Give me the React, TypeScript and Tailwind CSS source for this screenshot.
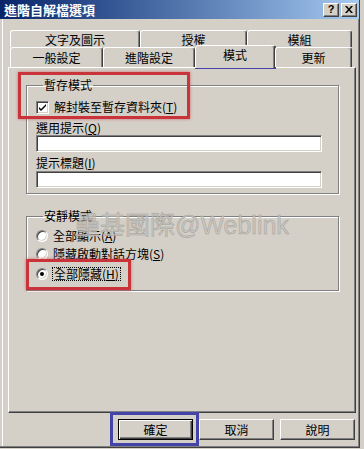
import type { ReactNode } from "react";

const raised =
  "border border-t-white border-l-white border-r-[#404040] border-b-[#404040] shadow-[inset_-1px_-1px_0_#808080]";
const sunken =
  "border border-t-[#808080] border-l-[#808080] border-r-white border-b-white shadow-[inset_1px_1px_0_#404040,inset_-1px_-1px_0_#d4d0c8]";
const tabEdge =
  "rounded-t-[3px] border-l border-t border-r border-l-white border-t-white border-r-[#404040] bg-[#d4d0c8] shadow-[inset_-1px_0_0_#808080]";

function Mn({ children }: { children: ReactNode }) {
  return <span className="underline underline-offset-[1px]">{children}</span>;
}

function Tab({ label, width, tall = false }: { label: string; width: string; tall?: boolean }) {
  return (
    <div className={`flex ${tall ? "h-[20px] pt-[1px]" : "h-[17px] pt-[2px]"} items-center justify-center ${width} ${tabEdge}`}>
      {label}
    </div>
  );
}

function Checkbox() {
  return (
    <span className={`flex h-[13px] w-[13px] items-center justify-center bg-white ${sunken}`}>
      <svg width="9" height="9" viewBox="0 0 9 9" aria-hidden="true">
        <path d="M1 4 L3 6 L8 1 L8 3 L3 8 L1 6 Z" fill="#000" />
      </svg>
    </span>
  );
}

function Radio({ checked = false }: { checked?: boolean }) {
  return (
    <span className="flex h-[12px] w-[12px] items-center justify-center rounded-full border border-t-[#808080] border-l-[#808080] border-r-white border-b-white bg-white shadow-[inset_1px_1px_0_#404040,inset_-1px_-1px_0_#d4d0c8]">
      {checked && <span className="h-[4px] w-[4px] rounded-full bg-black" />}
    </span>
  );
}

function Button({ label, isDefault = false }: { label: string; isDefault?: boolean }) {
  return (
    <button
      className={`flex h-[21px] w-[75px] items-center justify-center bg-[#d4d0c8] ${
        isDefault
          ? "border border-black shadow-[inset_1px_1px_0_#fff,inset_-1px_-1px_0_#404040,inset_-2px_-2px_0_#808080]"
          : raised
      }`}
    >
      {label}
    </button>
  );
}

export default function App() {
  return (
    <div className="relative h-[449px] w-[364px] overflow-hidden bg-[#d4d0c8] font-['Noto_Sans_CJK_TC','Liberation_Sans',sans-serif] text-[12px] leading-[14px] text-black">
      <div className="flex h-[448px] w-[360px] flex-col border-r border-b border-r-[#404040] border-b-[#404040] shadow-[inset_-1px_-1px_0_#808080,inset_2px_0_0_#d4d0c8,inset_3px_0_0_#fff]">
        {/* title bar */}
        <div className="flex h-[19px] items-center justify-between bg-linear-to-r from-[#0a246a] to-[#a6caf0] pl-[4px] pr-[2px]">
          <span className="text-[13px] font-bold text-white">進階自解檔選項</span>
          <div className="flex gap-[2px]">
            <span className={`flex h-[14px] w-[16px] items-center justify-center bg-[#d4d0c8] text-[11px] font-bold leading-none ${raised} font-['Liberation_Sans',sans-serif]`}>
              ?
            </span>
            <span className={`flex h-[14px] w-[16px] items-center justify-center bg-[#d4d0c8] ${raised}`}>
              <svg width="8" height="7" viewBox="0 0 8 7" aria-hidden="true">
                <path d="M0 0h2l2 2.5L6 0h2L5 3.5 8 7H6L4 4.5 2 7H0l3-3.5z" fill="#000" />
              </svg>
            </span>
          </div>
        </div>

        {/* tabs */}
        <div className="mt-[11px] ml-[10px] flex">
          <Tab label="文字及圖示" width="w-[130px]" />
          <Tab label="授權" width="w-[107px]" />
          <Tab label="模組" width="w-[105px]" />
        </div>
        <div className="relative z-10 -mb-px ml-[10px] flex h-[21px] items-start">
          <Tab label="一般設定" width="w-[93px]" tall />
          <Tab label="進階設定" width="w-[92px]" tall />
          <div className={`-mt-[2px] flex h-[23px] w-[80px] items-start justify-center pt-[2px] ${tabEdge}`}>模式</div>
          <Tab label="更新" width="w-[77px]" tall />
        </div>

        {/* panel */}
        <div className={`ml-[8px] flex h-[346px] w-[348px] flex-col bg-[#d4d0c8] ${raised}`}>
          <fieldset className="mt-[10px] ml-[17px] w-[313px] border border-[#808080] px-[9px] pb-[5px] shadow-[1px_1px_0_#fff,inset_1px_1px_0_#fff]">
            <legend className="ml-[7px] px-[1px] leading-[14px]">暫存模式</legend>
            <label className="mt-[8px] flex h-[14px] items-center gap-[5px]">
              <Checkbox />
              <span>
                解封裝至暫存資料夾(<Mn>T</Mn>)
              </span>
            </label>
            <div className="mt-[7px]">
              選用提示(<Mn>Q</Mn>)
            </div>
            <div className={`h-[17px] w-[286px] bg-white ${sunken}`} />
            <div className="mt-[4px]">
              提示標題(<Mn>I</Mn>)
            </div>
            <div className={`mt-[1px] h-[17px] w-[286px] bg-white ${sunken}`} />
          </fieldset>

          <fieldset className="mt-[15px] ml-[17px] w-[313px] border border-[#808080] px-[9px] pb-[9px] shadow-[1px_1px_0_#fff,inset_1px_1px_0_#fff]">
            <legend className="ml-[7px] px-[1px] leading-[14px]">安靜模式</legend>
            <div className="mt-[6px] flex h-[14px] items-center gap-[5px]">
              <Radio />
              <span>
                全部顯示(<Mn>A</Mn>)
              </span>
            </div>
            <div className="mt-[4px] flex h-[14px] items-center gap-[5px]">
              <Radio />
              <span>
                隱藏啟動對話方塊(<Mn>S</Mn>)
              </span>
            </div>
            <div className="mt-[6px] flex h-[14px] items-center gap-[4px]">
              <Radio checked />
              <span className="border border-dotted border-black px-[1px] leading-[12px]">
                全部隱藏(<Mn>H</Mn>)
              </span>
            </div>
          </fieldset>
        </div>

        {/* buttons */}
        <div className="mt-[6px] ml-[8px] flex w-[348px] justify-end gap-[6px] pr-[1px]">
          <Button label="確定" isDefault />
          <Button label="取消" />
          <Button label="說明" />
        </div>
      </div>

      {/* watermark */}
      <div className="pointer-events-none absolute top-[211px] left-[75px] text-[25px] leading-[25px] text-[#c9c5bf]/80 [-webkit-text-stroke:0.5px_#a29f9a]">
        壘基國際<span className="font-['Liberation_Sans',sans-serif]">@Weblink</span>
      </div>

      {/* highlight boxes */}
      <div className="pointer-events-none absolute top-[72px] left-[18px] h-[47px] w-[172px] border-[3px] border-[#c9343b] shadow-[0_0_3px_rgba(201,52,59,0.6)]" />
      <div className="pointer-events-none absolute top-[259px] left-[26px] h-[31px] w-[105px] border-[3px] border-[#c9343b] shadow-[0_0_3px_rgba(201,52,59,0.6)]" />
      <div className="pointer-events-none absolute top-[46px] left-[195px] h-[23px] w-[81px] border-[3px] border-[#4444a8]" />
      <div className="pointer-events-none absolute top-[412px] left-[110px] h-[34px] w-[89px] border-[3px] border-[#4444a8]" />
    </div>
  );
}
